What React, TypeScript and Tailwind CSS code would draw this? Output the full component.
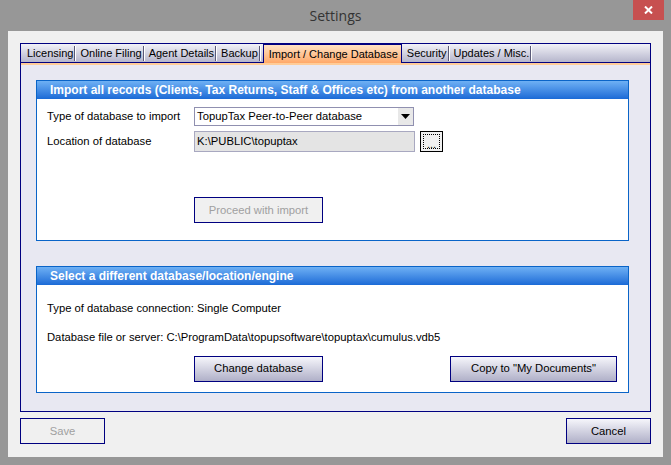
import React from "react";

const tabs = [
  "Licensing",
  "Online Filing",
  "Agent Details",
  "Backup",
  "Import / Change Database",
  "Security",
  "Updates / Misc.",
];

const ui = { fontFamily: '"Liberation Sans", Tahoma, Arial, sans-serif' };

function GroupHeader({ title }: { title: string }) {
  return (
    <div className="h-[18px] bg-gradient-to-b from-[#6eb0f4] to-[#1a6ad6] pl-[13px] text-[12px] font-bold leading-[18px] text-white">
      {title}
    </div>
  );
}

function NavButton({
  label,
  disabled,
  className,
}: {
  label: string;
  disabled?: boolean;
  className: string;
}) {
  return (
    <div
      className={
        "flex h-[26px] items-center justify-center border border-[#000080] text-[11.25px] " +
        (disabled
          ? "bg-[#f0f0f0] text-[#a0a0a0] "
          : "bg-gradient-to-b from-[#f6f6fb] to-[#b0b0c8] text-black ") +
        className
      }
    >
      {label}
    </div>
  );
}

export default function App() {
  return (
    <div className="flex h-[465px] w-[671px] flex-col bg-[#979797]" style={ui}>
      {/* title bar */}
      <div className="relative h-[31px]">
        <div
          className="pt-[5px] text-center text-[14px] text-[#333333]"
          style={{ fontFamily: '"Open Sans", sans-serif' }}
        >
          Settings
        </div>
        <div className="absolute right-[7px] top-0 flex h-[20px] w-[31px] items-center justify-center bg-[#c75050]">
          <svg width="9" height="8" viewBox="0 0 9 8">
            <path d="M1 0.5 L8 7.5 M8 0.5 L1 7.5" stroke="#fff" strokeWidth="2" />
          </svg>
        </div>
      </div>

      {/* client area */}
      <div className="mx-[8px] flex h-[426px] flex-col bg-[#f0f0f0] px-[12px] pt-[12px]">
        <div className="flex h-[369px] flex-col border border-[#000080] bg-[#e8e8f2]">
          {/* tab strip */}
          <div className="flex h-[19px] items-end border-b border-[#000080] bg-gradient-to-b from-[#f2f2f8] to-[#b6b6cc] pl-[2px]">
            {tabs.map((t) => {
              const active = t === "Import / Change Database";
              return active ? (
                <div
                  key={t}
                  className="-mb-[1px] ml-[2px] mr-[1px] flex h-[19px] items-center border-x border-t border-[#000080] bg-gradient-to-b from-[#ffe2c4] to-[#ffa868] pl-[5px] pr-[3px] text-[11px] text-black"
                >
                  {t}
                </div>
              ) : (
                <div key={t} className="flex h-[18px] items-center text-[11px] text-black">
                  <span className="pl-[4px] pr-[1px]">{t}</span>
                  <span className="h-[15px] w-[2px] border-l border-[#5a5a78] bg-white" />
                </div>
              );
            })}
          </div>
          <div className="h-[2px] bg-[#ffcc98]" />

          <div className="flex flex-col pl-[15px] pr-[21px] pt-[15px]">
            {/* group 1 */}
            <div className="flex h-[161px] flex-col border border-[#0a64c8] bg-white">
              <GroupHeader title="Import all records (Clients, Tax Returns, Staff & Offices etc) from another database" />
              <div className="flex flex-col px-[10px] pt-[8px] text-[11.25px] text-black">
                <div className="flex items-center">
                  <span className="w-[147px]">Type of database to import</span>
                  <div className="flex h-[19px] w-[220px] items-center justify-between border border-[#9090b0] bg-white pl-[2px]">
                    <span>TopupTax Peer-to-Peer database</span>
                    <div className="flex h-[17px] w-[15px] items-center justify-center bg-[#e8e8e8]">
                      <svg width="9" height="5" viewBox="0 0 9 5">
                        <path d="M0 0 H9 L4.5 5 Z" fill="#000" />
                      </svg>
                    </div>
                  </div>
                </div>
                <div className="mt-[5px] flex items-center">
                  <span className="w-[147px]">Location of database</span>
                  <div className="flex h-[21px] w-[221px] items-center border border-[#a8a8c0] bg-[#e4e4e4] pl-[2px]">
                    K:\PUBLIC\topuptax
                  </div>
                  <div className="ml-[5px] flex h-[21px] w-[23px] items-end justify-center border border-black bg-[#f0f0f0] p-[2px]">
                    <div className="flex h-full w-full items-end justify-center border border-dotted border-black text-[11px] leading-[8px]">
                      ...
                    </div>
                  </div>
                </div>
                <div className="mt-[45px] pl-[147px]">
                  <NavButton label="Proceed with import" disabled className="w-[129px]" />
                </div>
              </div>
            </div>

            {/* group 2 */}
            <div className="mt-[25px] flex h-[127px] flex-col border border-[#0a64c8] bg-white">
              <GroupHeader title="Select a different database/location/engine" />
              <div className="flex flex-col px-[10px] text-[11.25px] text-black">
                <div className="mt-[15px]">Type of database connection: Single Computer</div>
                <div className="mt-[12px]">
                  Database file or server: C:\ProgramData\topupsoftware\topuptax\cumulus.vdb5
                </div>
                <div className="mt-[10px] flex">
                  <NavButton label="Change database" className="ml-[147px] w-[129px]" />
                  <NavButton label={'Copy to "My Documents"'} className="ml-[127px] w-[167px]" />
                </div>
              </div>
            </div>
          </div>
        </div>

        {/* bottom buttons */}
        <div className="mt-[6px] flex justify-between">
          <NavButton label="Save" disabled className="w-[85px]" />
          <NavButton label="Cancel" className="w-[85px]" />
        </div>
      </div>
    </div>
  );
}
